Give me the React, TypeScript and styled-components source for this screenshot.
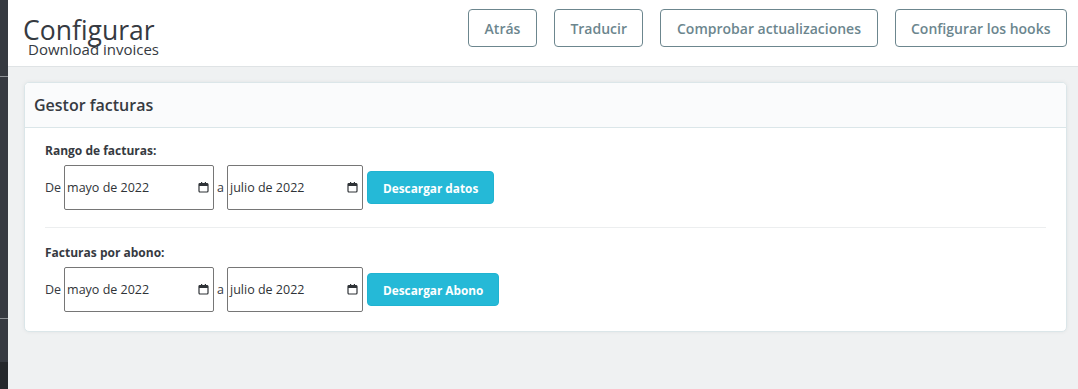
import React from 'react';
import styled, { createGlobalStyle } from 'styled-components';

const GlobalStyle = createGlobalStyle`
  html, body {
    margin: 0;
    padding: 0;
    height: 100%;
    background: #eff1f2;
    font-family: "Open Sans", "Liberation Sans", sans-serif;
    color: #363a41;
  }
  #root {
    min-height: 100%;
  }
`;

const Layout = styled.div`
  display: flex;
  min-height: 389px;
`;

const Sidebar = styled.nav`
  width: 8px;
  flex-shrink: 0;
  display: flex;
  flex-direction: column;
  background: #25282c;
`;

const SidebarBlock = styled.div<{ $h: number }>`
  height: ${p => p.$h}px;
  background: #363a41;
  border-bottom: 1px solid #8e9297;
`;

const SidebarTail = styled.div`
  height: 43px;
  background: #363a41;
`;

const Main = styled.main`
  flex: 1;
  display: flex;
  flex-direction: column;
  background: #eff1f2;
`;

const Header = styled.header`
  height: 66px;
  background: #fff;
  border-bottom: 1px solid #dfe3e5;
  display: flex;
  justify-content: space-between;
  padding: 0 11px 0 15px;
`;

const TitleBlock = styled.div`
  padding-top: 17px;
`;

const Title = styled.h1`
  margin: 0;
  font-size: 26.5px;
  line-height: 27px;
  font-weight: 400;
  color: #363a41;
`;

const Subtitle = styled.div`
  margin: -2px 0 0 5px;
  font-size: 15px;
  line-height: 15px;
  color: #363a41;
`;

const Toolbar = styled.div`
  display: flex;
  gap: 17px;
  padding-top: 9px;
  align-items: flex-start;
`;

const ToolbarButton = styled.button`
  height: 38px;
  padding: 0 15.5px;
  background: #fff;
  border: 1px solid #6c868e;
  border-radius: 4px;
  color: #6c868e;
  font-family: inherit;
  font-size: 14px;
  font-weight: 600;
  cursor: pointer;
`;

const Card = styled.section`
  margin: 15px 11px 0 16px;
  background: #fff;
  border: 1px solid #dbe6e9;
  border-radius: 5px;
  box-shadow: 0 0 4px 0 rgba(0, 0, 0, 0.06);
  overflow: hidden;
`;

const CardHeader = styled.div`
  height: 44px;
  line-height: 44px;
  padding: 0 9px;
  background: #fafbfc;
  border-bottom: 1px solid #dbe6e9;
  font-size: 16px;
  font-weight: 600;
  color: #363a41;
`;

const CardBody = styled.div`
  padding: 14px 20px 19px;
`;

const FieldLabel = styled.div`
  font-size: 12px;
  line-height: 18px;
  font-weight: 700;
  color: #363a41;
  margin-bottom: 5px;
`;

const Row = styled.div`
  display: flex;
  align-items: center;
  gap: 3px;
  font-size: 12.5px;
`;

const Separator = styled.hr`
  border: 0;
  border-top: 1px solid #eceeef;
  margin: 17px 0 16px;
`;

const DateBox = styled.div<{ $w: number }>`
  width: ${p => p.$w}px;
  height: 45px;
  box-sizing: border-box;
  border: 1px solid #767676;
  border-radius: 2px;
  display: flex;
  align-items: center;
  justify-content: space-between;
  padding: 0 4px 0 2px;
  color: #2f3337;
  font-size: 12.5px;
`;

const PrimaryButton = styled.button`
  margin-left: 1px;
  height: 33px;
  padding: 0 15px;
  background: #25b9d7;
  border: 1px solid #20b3d1;
  border-radius: 4px;
  color: #fff;
  font-family: inherit;
  font-size: 11.8px;
  font-weight: 700;
  cursor: pointer;
`;

const CalendarIcon = () => (
  <svg width="11" height="11" viewBox="0 0 11 11">
    <rect x="1" y="1.5" width="9" height="8.5" rx="1" fill="none" stroke="#2f3337" strokeWidth="1.2" />
    <rect x="1" y="1.5" width="9" height="2.5" fill="#2f3337" />
    <rect x="3" y="0" width="1.2" height="2" fill="#2f3337" />
    <rect x="6.8" y="0" width="1.2" height="2" fill="#2f3337" />
  </svg>
);

const DateField = ({ value, width }: { value: string; width: number }) => (
  <DateBox $w={width}>
    <span>{value}</span>
    <CalendarIcon />
  </DateBox>
);

const RangeRow = ({ action }: { action: string }) => (
  <Row>
    <span>De</span>
    <DateField value="mayo de 2022" width={150} />
    <span>a</span>
    <DateField value="julio de 2022" width={136} />
    <PrimaryButton>{action}</PrimaryButton>
  </Row>
);

export default function App() {
  return (
    <>
      <GlobalStyle />
      <Layout>
        <Sidebar>
          <SidebarBlock $h={76} />
          <SidebarBlock $h={241} />
          <SidebarTail />
        </Sidebar>
        <Main>
          <Header>
            <TitleBlock>
              <Title>Configurar</Title>
              <Subtitle>Download invoices</Subtitle>
            </TitleBlock>
            <Toolbar>
              <ToolbarButton>Atrás</ToolbarButton>
              <ToolbarButton>Traducir</ToolbarButton>
              <ToolbarButton>Comprobar actualizaciones</ToolbarButton>
              <ToolbarButton>Configurar los hooks</ToolbarButton>
            </Toolbar>
          </Header>
          <Card>
            <CardHeader>Gestor facturas</CardHeader>
            <CardBody>
              <FieldLabel>Rango de facturas:</FieldLabel>
              <RangeRow action="Descargar datos" />
              <Separator />
              <FieldLabel>Facturas por abono:</FieldLabel>
              <RangeRow action="Descargar Abono" />
            </CardBody>
          </Card>
        </Main>
      </Layout>
    </>
  );
}
